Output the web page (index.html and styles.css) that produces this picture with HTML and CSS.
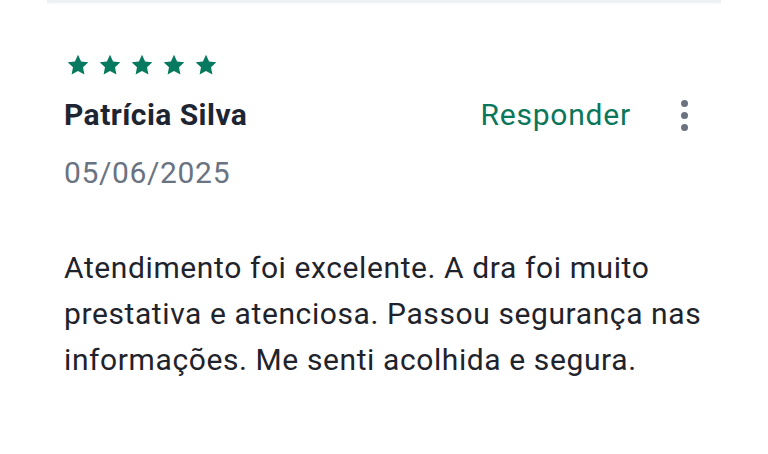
FILE: index.html
```html
<!DOCTYPE html>
<html lang="pt">
<head>
<meta charset="utf-8">
<link rel="stylesheet" href="styles.css">
</head>
<body>
<div class="page">
  <div class="divider"></div>
  <article class="review">
    <div class="stars">
      <svg class="star" viewBox="0 0 24 24"><path d="M12 1.8l3.1 6.6 7.2.9-5.3 5 1.4 7.1L12 17.9l-6.4 3.5L7 14.3l-5.3-5 7.2-.9z"/></svg>
      <svg class="star" viewBox="0 0 24 24"><path d="M12 1.8l3.1 6.6 7.2.9-5.3 5 1.4 7.1L12 17.9l-6.4 3.5L7 14.3l-5.3-5 7.2-.9z"/></svg>
      <svg class="star" viewBox="0 0 24 24"><path d="M12 1.8l3.1 6.6 7.2.9-5.3 5 1.4 7.1L12 17.9l-6.4 3.5L7 14.3l-5.3-5 7.2-.9z"/></svg>
      <svg class="star" viewBox="0 0 24 24"><path d="M12 1.8l3.1 6.6 7.2.9-5.3 5 1.4 7.1L12 17.9l-6.4 3.5L7 14.3l-5.3-5 7.2-.9z"/></svg>
      <svg class="star" viewBox="0 0 24 24"><path d="M12 1.8l3.1 6.6 7.2.9-5.3 5 1.4 7.1L12 17.9l-6.4 3.5L7 14.3l-5.3-5 7.2-.9z"/></svg>
    </div>
    <div class="head">
      <div class="name">Patrícia Silva</div>
      <div class="actions">
        <span class="reply">Responder</span>
        <span class="more"><i></i><i></i><i></i></span>
      </div>
    </div>
    <div class="date">05/06/2025</div>
    <p class="text">Atendimento foi excelente. A dra foi muito prestativa e atenciosa. Passou segurança nas informações. Me senti acolhida e segura.</p>
  </article>
</div>
</body>
</html>
```

FILE: styles.css
```css
html, body {
  margin: 0;
  padding: 0;
  background: #ffffff;
}
.page {
  width: 768px;
  height: 454px;
  overflow: hidden;
  font-family: Roboto, "Liberation Sans", sans-serif;
}
.divider {
  margin: 0 47px;
  height: 3px;
  background: #eef0f3;
  box-shadow: 0 2px 3px rgba(0, 0, 0, 0.02);
}
.review {
  padding: 50px 0 0 64px;
}
.stars {
  display: flex;
  gap: 8px;
  height: 24px;
  padding-left: 2px;
}
.star {
  width: 24px;
  height: 24px;
  fill: #077a5f;
}
.head {
  display: flex;
  align-items: center;
  justify-content: space-between;
  margin-top: 20px;
  padding-right: 80px;
  height: 36px;
}
.name {
  font-size: 30px;
  font-weight: 700;
  letter-spacing: 0.45px;
  color: #1e2532;
  line-height: 36px;
}
.actions {
  display: flex;
  align-items: center;
  gap: 50px;
}
.reply {
  font-size: 30px;
  letter-spacing: 0.8px;
  color: #0a765a;
  line-height: 36px;
  margin-top: -1px;
}
.more {
  display: flex;
  flex-direction: column;
  gap: 5px;
}
.more i {
  width: 7px;
  height: 7px;
  border-radius: 50%;
  background: #6b7280;
}
.date {
  margin-top: 22px;
  font-size: 30px;
  letter-spacing: 0.65px;
  color: #6a7382;
  line-height: 36px;
}
.text {
  margin: 54px 0 0 0;
  width: 665px;
  font-size: 30px;
  letter-spacing: 0.6px;
  line-height: 46px;
  color: #1f232b;
}
```
